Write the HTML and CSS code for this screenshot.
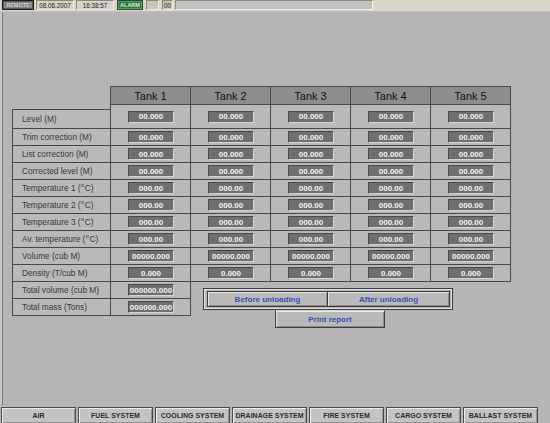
FILE: index.html
```html
<!DOCTYPE html>
<html lang="en">
<head>
  <meta charset="UTF-8">
  <title>Tank Unloading Report</title>
  <link rel="stylesheet" href="styles.css">
</head>
<body>
  <div class="topbar">
    <span class="tb remote">REMOTE</span>
    <span class="tb date">08.06.2007</span>
    <span class="tb time">16:38:57</span>
    <span class="tb alarm">ALARM</span>
    <span class="tb blank"></span>
    <span class="tb count">00</span>
    <span class="tb message"></span>
  </div>

  <main class="screen">
    <div class="tank-grid">
      <div class="corner"></div>
      <div class="hd">Tank 1</div>
      <div class="hd">Tank 2</div>
      <div class="hd">Tank 3</div>
      <div class="hd">Tank 4</div>
      <div class="hd last">Tank 5</div>

      <!-- per-tank rows -->
      <div class="lbl first">Level (M)</div>
      <div class="cell"><span class="val">00.000</span></div>
      <div class="cell"><span class="val">00.000</span></div>
      <div class="cell"><span class="val">00.000</span></div>
      <div class="cell"><span class="val">00.000</span></div>
      <div class="cell last"><span class="val">00.000</span></div>

      <div class="lbl">Trim correction (M)</div>
      <div class="cell"><span class="val">00.000</span></div>
      <div class="cell"><span class="val">00.000</span></div>
      <div class="cell"><span class="val">00.000</span></div>
      <div class="cell"><span class="val">00.000</span></div>
      <div class="cell last"><span class="val">00.000</span></div>

      <div class="lbl">List correction (M)</div>
      <div class="cell"><span class="val">00.000</span></div>
      <div class="cell"><span class="val">00.000</span></div>
      <div class="cell"><span class="val">00.000</span></div>
      <div class="cell"><span class="val">00.000</span></div>
      <div class="cell last"><span class="val">00.000</span></div>

      <div class="lbl">Corrected level (M)</div>
      <div class="cell"><span class="val">00.000</span></div>
      <div class="cell"><span class="val">00.000</span></div>
      <div class="cell"><span class="val">00.000</span></div>
      <div class="cell"><span class="val">00.000</span></div>
      <div class="cell last"><span class="val">00.000</span></div>

      <div class="lbl">Temperature 1 (<span class="deg">o</span>C)</div>
      <div class="cell"><span class="val">000.00</span></div>
      <div class="cell"><span class="val">000.00</span></div>
      <div class="cell"><span class="val">000.00</span></div>
      <div class="cell"><span class="val">000.00</span></div>
      <div class="cell last"><span class="val">000.00</span></div>

      <div class="lbl">Temperature 2 (<span class="deg">o</span>C)</div>
      <div class="cell"><span class="val">000.00</span></div>
      <div class="cell"><span class="val">000.00</span></div>
      <div class="cell"><span class="val">000.00</span></div>
      <div class="cell"><span class="val">000.00</span></div>
      <div class="cell last"><span class="val">000.00</span></div>

      <div class="lbl">Temperature 3 (<span class="deg">o</span>C)</div>
      <div class="cell"><span class="val">000.00</span></div>
      <div class="cell"><span class="val">000.00</span></div>
      <div class="cell"><span class="val">000.00</span></div>
      <div class="cell"><span class="val">000.00</span></div>
      <div class="cell last"><span class="val">000.00</span></div>

      <div class="lbl">Av. temperature (<span class="deg">o</span>C)</div>
      <div class="cell"><span class="val">000.00</span></div>
      <div class="cell"><span class="val">000.00</span></div>
      <div class="cell"><span class="val">000.00</span></div>
      <div class="cell"><span class="val">000.00</span></div>
      <div class="cell last"><span class="val">000.00</span></div>

      <div class="lbl">Volume (cub M)</div>
      <div class="cell"><span class="val">00000.000</span></div>
      <div class="cell"><span class="val">00000.000</span></div>
      <div class="cell"><span class="val">00000.000</span></div>
      <div class="cell"><span class="val">00000.000</span></div>
      <div class="cell last"><span class="val">00000.000</span></div>

      <div class="lbl">Density (T/cub M)</div>
      <div class="cell"><span class="val">0.000</span></div>
      <div class="cell"><span class="val">0.000</span></div>
      <div class="cell"><span class="val">0.000</span></div>
      <div class="cell"><span class="val">0.000</span></div>
      <div class="cell last"><span class="val">0.000</span></div>

      <!-- totals, tank 1 column only -->
      <div class="lbl">Total volume (cub M)</div>
      <div class="cell solo"><span class="val">000000.000</span></div>

      <div class="actions">
        <div class="unload-group">
          <button class="btn">Before unloading</button>
          <button class="btn">After unloading</button>
        </div>
        <button class="btn print">Print report</button>
      </div>

      <div class="lbl">Total mass (Tons)</div>
      <div class="cell solo"><span class="val">000000.000</span></div>
    </div>
  </main>

  <nav class="sysbar">
    <button class="sys">AIR</button>
    <button class="sys">FUEL SYSTEM</button>
    <button class="sys">COOLING SYSTEM</button>
    <button class="sys">DRAINAGE SYSTEM</button>
    <button class="sys">FIRE SYSTEM</button>
    <button class="sys">CARGO SYSTEM</button>
    <button class="sys">BALLAST SYSTEM</button>
  </nav>
</body>
</html>
```

FILE: styles.css
```css
html, body {
  margin: 0;
  height: 423px;
  overflow: hidden;
}

body {
  background: #b5b5b5;
  font-family: "Liberation Sans", Arial, sans-serif;
  color: #333;
}

/* status strip on top */
.topbar {
  height: 11px;
  background: #dad6ca;
  border-bottom: 1px solid #c4c0b4;
  display: flex;
  align-items: flex-start;
  padding-left: 2px;
}

.tb {
  box-sizing: border-box;
  height: 10px;
  margin-right: 2px;
  display: flex;
  align-items: center;
  justify-content: center;
  font-size: 6.3px;
  color: #222;
  background: #d6d2c7;
  border: 1px solid;
  border-color: #8a877f #f0ede4 #f0ede4 #8a877f;
}

.remote {
  width: 32px;
  background: #8c8c8c;
  border: 1px solid #1c1c1c;
  box-shadow: inset 0 0 0 1px #555;
  color: #eee;
  font-weight: bold;
  font-size: 5.5px;
  text-shadow: 0 0 1px #000;
}
.date { width: 38px; }
.time { width: 38px; margin-right: 3px; }
.alarm {
  width: 26px;
  margin-right: 3px;
  background: #2f7843;
  border: 1px solid #274a2e;
  box-shadow: inset 0 0 0 1px #5b9a69;
  color: #d6f0d2;
  font-weight: bold;
  font-size: 5.5px;
}
.blank { width: 13px; background: #c8c5bc; margin-right: 3px; }
.count { width: 11px; background: #c8c5bc; }
.message { width: 198px; background: #c3c2be; }

/* main panel */
.screen {
  box-sizing: border-box;
  height: 393px;
  border-left: 2px solid #c8c8c8;
  box-shadow: inset 1px 0 0 #7a7a7a;
  padding: 74px 0 0 10px;
}

.tank-grid {
  display: grid;
  grid-template-columns: 98px 80px 80px 80px 80px 81px;
  grid-template-rows: 19px 24px repeat(11, 17px);
}

.hd, .lbl, .cell {
  box-sizing: border-box;
  border: 0 solid #474747;
}

.hd {
  border-width: 1px 0 1px 1px;
  background: #8d8d8d;
  color: #111;
  font-size: 11px;
  display: flex;
  align-items: center;
  justify-content: center;
}
.hd.last { border-right-width: 1px; }

.lbl {
  border-width: 0 0 1px 1px;
  background: #b9b9b9;
  font-size: 8.3px;
  color: #383838;
  display: flex;
  align-items: center;
  padding-left: 9px;
  white-space: pre;
}
.lbl.first {
  border-top-width: 1px;
  align-self: end;
  height: 20px;
}
.deg {
  font-size: 5.5px;
  position: relative;
  top: -3px;
  margin: 0 0.5px;
}

.cell {
  border-width: 0 0 1px 1px;
  background: #b9b9b9;
  display: flex;
  align-items: center;
  justify-content: center;
}
.cell.last { border-right-width: 1px; }
.cell.solo {
  border-right-width: 1px;
  width: 81px;
}

.val {
  box-sizing: border-box;
  width: 46px;
  height: 12px;
  margin-left: 1px;
  background: #6f6f6f;
  border: 1px solid;
  border-color: #4a4a4a #d4d4d4 #d4d4d4 #4a4a4a;
  color: #f4f4f4;
  font-size: 8px;
  font-weight: bold;
  display: flex;
  align-items: center;
  justify-content: center;
}

/* unloading buttons */
.actions {
  grid-column: 3 / 7;
  grid-row: 12 / 14;
  padding: 6px 0 0 13px;
  display: flex;
  flex-direction: column;
  align-items: flex-start;
}

.unload-group {
  flex-shrink: 0;
  display: flex;
  width: 250px;
  box-sizing: border-box;
  padding: 2px 2px 2px 3px;
  border: 1px solid #3a3a3a;
  box-shadow: inset 1px 1px 0 #e2e2e2, inset -1px -1px 0 #e2e2e2;
}

.btn {
  box-sizing: border-box;
  flex-shrink: 0;
  height: 16px;
  padding: 0;
  background: #b9b9b9;
  border: 1px solid #3c3c3c;
  box-shadow: inset 1px 1px 0 #e6e6e6, inset -1px -1px 0 #8c8c8c;
  color: #3b4fb5;
  font-family: "Liberation Sans", Arial, sans-serif;
  font-size: 8px;
  font-weight: bold;
}
.unload-group .btn { width: 121px; }
.unload-group .btn + .btn { width: 122px; border-left: 0; }

.btn.print {
  width: 110px;
  height: 18px;
  margin-left: 72px;
  border-top-color: #d8d8d8;
}

/* system navigation */
.sysbar {
  display: flex;
  gap: 2px;
  padding: 2px 0 0 1px;
}

.sys {
  box-sizing: border-box;
  width: 75px;
  height: 17px;
  padding: 0;
  background: #c3c3c3;
  border: 1px solid #4c4c4c;
  box-shadow: inset 1px 1px 0 #ececec, inset -1px -1px 0 #939393;
  color: #2c2c2c;
  font-family: "Liberation Sans", Arial, sans-serif;
  font-size: 7px;
  font-weight: bold;
}
```
